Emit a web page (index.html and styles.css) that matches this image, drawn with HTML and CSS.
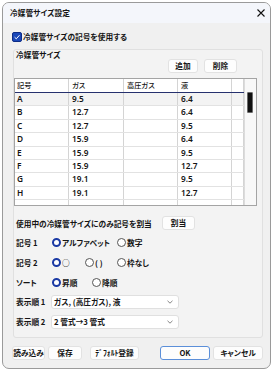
FILE: index.html
```html
<!DOCTYPE html>
<html lang="ja">
<head>
<meta charset="utf-8">
<link rel="stylesheet" href="styles.css">
</head>
<body>
<div class="window">
  <div class="titlebar">
    <span class="title">冷媒管サイズ設定</span>
    <svg class="close" width="8" height="8" viewBox="0 0 8 8"><path d="M0.5 0.5 L7.5 7.5 M7.5 0.5 L0.5 7.5" stroke="#111" stroke-width="1.1" fill="none"/></svg>
  </div>
  <div class="content">
    <div class="check-row">
      <span class="checkbox"><svg width="8" height="8" viewBox="0 0 8 8"><path d="M1.6 4.2 L3.3 5.8 L6.5 2.2" stroke="#fff" stroke-width="1" fill="none"/></svg></span>
      <span class="check-label">冷媒管サイズの記号を使用する</span>
    </div>
    <div class="group">
      <div class="group-title">冷媒管サイズ</div>
      <div class="tool-row">
        <button class="btn btn-add">追加</button>
        <button class="btn btn-del">削除</button>
      </div>
      <div class="grid">
        <div class="grid-body">
          <div class="row head"><span>記号</span><span>ガス</span><span>高圧ガス</span><span>液</span><span></span></div>
          <div class="row sel"><span>A</span><span>9.5</span><span></span><span>6.4</span><span></span></div>
          <div class="row"><span>B</span><span>12.7</span><span></span><span>6.4</span><span></span></div>
          <div class="row"><span>C</span><span>12.7</span><span></span><span>9.5</span><span></span></div>
          <div class="row"><span>D</span><span>15.9</span><span></span><span>6.4</span><span></span></div>
          <div class="row"><span>E</span><span>15.9</span><span></span><span>9.5</span><span></span></div>
          <div class="row"><span>F</span><span>15.9</span><span></span><span>12.7</span><span></span></div>
          <div class="row"><span>G</span><span>19.1</span><span></span><span>9.5</span><span></span></div>
          <div class="row"><span>H</span><span>19.1</span><span></span><span>12.7</span><span></span></div>
          <div class="row"><span></span><span></span><span></span><span></span><span></span></div>
        </div>
        <div class="vscroll"><div class="thumb"></div></div>
      </div>
      <div class="assign-row">
        <span class="assign-text">使用中の冷媒管サイズにのみ記号を割当</span>
        <button class="btn btn-assign">割当</button>
      </div>
      <div class="opt-row">
        <span class="opt-label">記号 1</span>
        <span class="opt w65"><span class="radio on"></span>アルファベット</span>
        <span class="opt"><span class="radio"></span>数字</span>
      </div>
      <div class="opt-row">
        <span class="opt-label">記号 2</span>
        <span class="opt w33"><span class="radio on"></span>○</span>
        <span class="opt w32"><span class="radio"></span>(&nbsp;)</span>
        <span class="opt"><span class="radio"></span>枠なし</span>
      </div>
      <div class="opt-row">
        <span class="opt-label">ソート</span>
        <span class="opt w40"><span class="radio on"></span>昇順</span>
        <span class="opt"><span class="radio"></span>降順</span>
      </div>
      <div class="sel-row first">
        <span class="opt-label">表示順 1</span>
        <div class="select"><span>ガス, (高圧ガス), 液</span><svg width="6" height="4" viewBox="0 0 6 4"><path d="M0.5 0.8 L3 3.2 L5.5 0.8" stroke="#666" stroke-width="0.8" fill="none"/></svg></div>
      </div>
      <div class="sel-row">
        <span class="opt-label">表示順 2</span>
        <div class="select"><span>2 管式→3 管式</span><svg width="6" height="4" viewBox="0 0 6 4"><path d="M0.5 0.8 L3 3.2 L5.5 0.8" stroke="#666" stroke-width="0.8" fill="none"/></svg></div>
      </div>
    </div>
    <div class="footer">
      <button class="btn f-load">読み込み</button>
      <button class="btn f-save">保存</button>
      <button class="btn f-def">ﾃﾞﾌｫﾙﾄ登録</button>
      <button class="btn f-ok">OK</button>
      <button class="btn f-cancel">キャンセル</button>
    </div>
  </div>
</div>
</body>
</html>
```
FILE: styles.css
```css
html, body {
  margin: 0;
  padding: 0;
}
body {
  width: 275px;
  height: 372px;
  overflow: hidden;
  background: #ffffff;
  font-family: "Noto Sans CJK JP", "Noto Sans", sans-serif;
  font-size: 7.7px;
  font-weight: 600;
  font-feature-settings: "palt";
  color: #151515;
}
.window {
  margin: 2px 0 0 2px;
  width: 269px;
  height: 367px;
  box-sizing: border-box;
  border: 1px solid #9a9a9a;
  border-radius: 7px;
  background: #f0f0f0;
  overflow: hidden;
  display: flex;
  flex-direction: column;
}
.titlebar {
  height: 20px;
  flex: none;
  background: #f4f6fb;
  display: flex;
  align-items: center;
  justify-content: space-between;
  padding: 0 5px 0 7px;
}
.title {
  line-height: 1;
}
.close {
  display: block;
}
.content {
  flex: 1;
  padding: 0 7px 0 9px;
  display: flex;
  flex-direction: column;
}
.check-row {
  margin-top: 9px;
  height: 10px;
  display: flex;
  align-items: center;
}
.checkbox {
  width: 10px;
  height: 10px;
  box-sizing: border-box;
  border: 1px solid #0d2c86;
  border-radius: 2px;
  background: #1a47b8;
  display: flex;
  align-items: center;
  justify-content: center;
}
.checkbox svg { display: block; }
.check-label {
  margin-left: 1px;
  line-height: 1;
}
.group {
  margin: 7px 0 0 1px;
  width: 250px;
  box-sizing: border-box;
  border: 1px solid #e0e0e0;
  border-radius: 3px;
  background: #f3f3f3;
  display: flex;
  flex-direction: column;
  padding: 0 0 8px 0;
}
.group-title {
  height: 9px;
  line-height: 9px;
  padding-left: 2px;
}
.tool-row {
  height: 14px;
  display: flex;
  justify-content: flex-end;
  gap: 6px;
  padding-right: 25px;
}
.btn {
  font: inherit;
  font-feature-settings: "palt";
  color: #151515;
  background: #fdfdfd;
  border: 1px solid #e2e2e2;
  border-radius: 3px;
  padding: 0;
  margin: 0;
  height: 14px;
  line-height: 12px;
  text-align: center;
  white-space: nowrap;
  overflow: hidden;
  box-sizing: border-box;
}
.btn-add { width: 30px; }
.btn-del { width: 33px; }
.grid {
  margin-top: 5px;
  width: 243px;
  height: 128px;
  box-sizing: border-box;
  border: 1px solid #a4a4a4;
  background: #ffffff;
  display: flex;
}
.grid-body {
  width: 229px;
  height: 126px;
  overflow: hidden;
}
.row {
  display: grid;
  grid-template-columns: 54px 55px 54px 54px 12px;
  height: 13.4px;
  box-sizing: border-box;
  border-bottom: 1px solid #e2e2e2;
  font-family: "Noto Sans", "Noto Sans CJK JP", sans-serif;
  font-size: 8.3px;
  font-weight: 600;
}
.row span {
  border-right: 1px solid #d4d4d4;
  padding-left: 3px;
  line-height: 12.4px;
  white-space: nowrap;
  overflow: hidden;
}
.row span:first-child { padding-left: 2px; }
.row.head {
  height: 14px;
  border-bottom: 1px solid #26316e;
  font-family: "Noto Sans CJK JP", sans-serif;
  font-size: 7.2px;
  font-weight: 500;
}
.row.head span { line-height: 13px; }
.row.sel { background: #f3f3f3; }
.vscroll {
  width: 12px;
  box-sizing: border-box;
  border-left: 1px solid #dcdcdc;
  background: #f8f8f8;
}
.thumb {
  margin: 13px 0 0 2px;
  width: 6px;
  height: 21px;
  box-sizing: border-box;
  border: 1px solid #6a6a6a;
  border-radius: 1px;
  background: #101010;
}
.assign-row {
  margin-top: 10px;
  height: 14px;
  display: flex;
  align-items: center;
}
.assign-text {
  width: 148px;
  padding-left: 2px;
  box-sizing: border-box;
  white-space: nowrap;
}
.btn-assign { width: 33px; }
.opt-row {
  height: 20px;
  display: flex;
  align-items: center;
}
.assign-row + .opt-row { margin-top: 2px; }
.opt-label {
  width: 38px;
  padding-left: 2px;
  box-sizing: border-box;
  white-space: nowrap;
  flex: none;
}
.opt {
  display: flex;
  align-items: center;
  white-space: nowrap;
}
.w65 { width: 65px; }
.w33 { width: 33px; }
.w32 { width: 32px; }
.w40 { width: 40px; }
.radio {
  width: 9px;
  height: 9px;
  box-sizing: border-box;
  border: 1px solid #555;
  border-radius: 50%;
  background: #fff;
  margin-right: 1px;
  flex: none;
}
.radio.on {
  border: 2.6px solid #1b3aa4;
}
.sel-row {
  height: 14px;
  display: flex;
  align-items: center;
  margin-top: 6px;
}
.sel-row.first { margin-top: 2.7px; }
.select {
  width: 128px;
  height: 14px;
  box-sizing: border-box;
  border: 1px solid #e0e0e0;
  border-radius: 3px;
  background: #fff;
  display: flex;
  align-items: center;
  justify-content: space-between;
  padding: 0 5px 0 2px;
  margin-left: -1px;
}
.select svg { display: block; }
.footer {
  margin-top: 8px;
  display: flex;
  height: 14px;
}
.f-load { width: 33px; }
.f-save { width: 34px; margin-left: 3px; }
.f-def { width: 49px; margin-left: 8px; }
.f-ok { width: 50px; margin-left: 21px; border-color: #5b8fd9; }
.f-cancel { width: 50px; margin-left: 3px; }
```
